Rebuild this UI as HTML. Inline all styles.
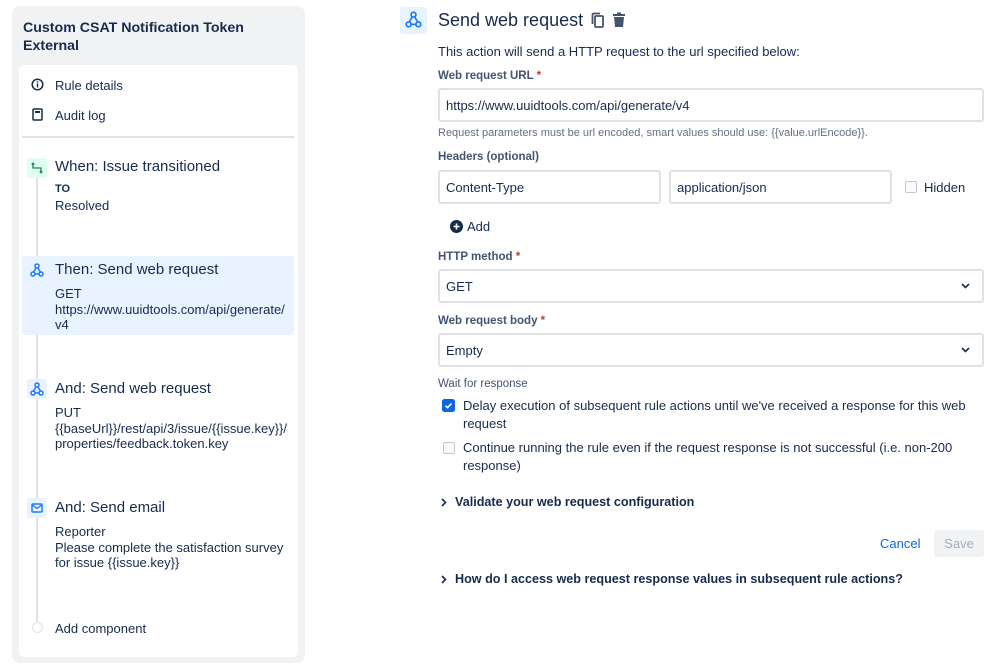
<!DOCTYPE html>
<html><head><meta charset="utf-8"><style>
*{box-sizing:border-box;margin:0;padding:0}
body{width:999px;height:667px;background:#fff;font-family:"Liberation Sans",sans-serif;color:#172b4d;position:relative;overflow:hidden}
.a{position:absolute;white-space:nowrap}
.t13{font-size:13px}
.lbl{font-size:11.5px;font-weight:bold;color:#44546f}
.req{color:#c9372c}
.inp{position:absolute;border:2px solid #dfe1e6;border-radius:3px;background:#fff;font-size:13px;padding-left:6px;display:flex;align-items:center}
.cb{position:absolute;width:12px;height:12px;border:1.5px solid #c1c7d0;border-radius:2px;background:#fafbfc}
.ic{position:absolute;width:20px;height:20px;border-radius:3px;display:flex;align-items:center;justify-content:center}
</style></head><body>
<div class="a" style="left:12px;top:6px;width:293px;height:657px;background:#f1f2f4;border-radius:8px"></div>
<div class="a" style="left:23px;top:19px;font-size:14.2px;font-weight:bold;line-height:18px">Custom CSAT Notification Token<br>External</div>
<div class="a" style="left:19px;top:65px;width:279px;height:592px;background:#fff;border-radius:6px"></div>
<svg class="a" style="left:31px;top:78px" width="13" height="13" viewBox="0 0 13 13"><circle cx="6.5" cy="6.5" r="5.3" fill="none" stroke="#172b4d" stroke-width="1.5"/><rect x="5.8" y="5.5" width="1.4" height="4" fill="#172b4d"/><circle cx="6.5" cy="3.9" r="0.8" fill="#172b4d"/></svg>
<div class="a t13" style="left:55px;top:78px">Rule details</div>
<svg class="a" style="left:32px;top:108px" width="11" height="13" viewBox="0 0 11 13"><rect x="1" y="1" width="9" height="11" rx="1" fill="none" stroke="#172b4d" stroke-width="1.5"/><rect x="3" y="3" width="5" height="2" fill="#172b4d"/></svg>
<div class="a t13" style="left:55px;top:108px">Audit log</div>
<div class="a" style="left:22px;top:136px;width:272px;height:2px;background:#dfe1e6"></div>
<div class="a" style="left:36px;top:175px;width:2px;height:447px;background:#dfe1e6"></div>
<div class="a" style="left:22px;top:256px;width:272px;height:79px;background:#e9f2ff;border-radius:3px"></div>
<div class="ic" style="left:27px;top:158px;background:#dcfff1"><svg width="12" height="12" viewBox="0 0 12 12"><circle cx="2" cy="2" r="1.4" fill="#1f845a"/><circle cx="10" cy="10" r="1.4" fill="#1f845a"/><path d="M2 2v4h8v4" fill="none" stroke="#1f845a" stroke-width="1.3"/></svg></div>
<div class="a" style="left:55px;top:158px;font-size:15px">When: Issue transitioned</div>
<div class="a" style="left:55px;top:183px;font-size:11px;font-weight:bold">TO</div>
<div class="a t13" style="left:55px;top:198px">Resolved</div>
<svg class="a" style="left:30px;top:263px" width="14" height="14" viewBox="0 0 14 14"><g fill="none" stroke="#1d7afc" stroke-width="1.5"><circle cx="7" cy="3" r="2"/><circle cx="3" cy="11" r="2"/><circle cx="11" cy="11" r="2"/><path d="M6 5L3.5 9M5 11h4M8 5l2.5 4"/></g></svg>
<div class="a" style="left:55px;top:261px;font-size:15px">Then: Send web request</div>
<div class="a t13" style="left:55px;top:286px;line-height:15.5px">GET<br>https://www.uuidtools.com/api/generate/<br>v4</div>
<div class="ic" style="left:27px;top:379px;background:#e9f2ff"><svg width="14" height="14" viewBox="0 0 14 14"><g fill="none" stroke="#1d7afc" stroke-width="1.5"><circle cx="7" cy="3" r="2"/><circle cx="3" cy="11" r="2"/><circle cx="11" cy="11" r="2"/><path d="M6 5L3.5 9M5 11h4M8 5l2.5 4"/></g></svg></div>
<div class="a" style="left:55px;top:380px;font-size:15px">And: Send web request</div>
<div class="a t13" style="left:55px;top:405px;line-height:15.5px">PUT<br>{{baseUrl}}/rest/api/3/issue/{{issue.key}}/<br>properties/feedback.token.key</div>
<div class="ic" style="left:27px;top:498px;background:#e9f2ff"><svg width="12" height="10" viewBox="0 0 12 10"><rect x="1" y="1" width="10" height="8" rx="1" fill="none" stroke="#1d7afc" stroke-width="1.5"/><path d="M1.5 2l4.5 3.5L10.5 2" fill="none" stroke="#1d7afc" stroke-width="1.3"/></svg></div>
<div class="a" style="left:55px;top:499px;font-size:15px">And: Send email</div>
<div class="a t13" style="left:55px;top:524px;line-height:15.5px">Reporter<br>Please complete the satisfaction survey<br>for issue {{issue.key}}</div>
<div class="a" style="left:32px;top:622px;width:11px;height:11px;border:1.5px solid #dfe1e6;border-radius:50%;background:#fff"></div>
<div class="a t13" style="left:55px;top:621px">Add component</div>

<div class="a" style="left:400px;top:7px;width:27px;height:27px;background:#e9f2ff;border-radius:3px"></div>
<svg class="a" style="left:405px;top:11px" width="17" height="17" viewBox="0 0 14 14"><g fill="none" stroke="#1d7afc" stroke-width="1.4"><circle cx="7" cy="3" r="2"/><circle cx="3" cy="11" r="2"/><circle cx="11" cy="11" r="2"/><path d="M6 5L3.5 9M5 11h4M8 5l2.5 4"/></g></svg>
<div class="a" style="left:438px;top:10px;font-size:18px">Send web request</div>
<svg class="a" style="left:591px;top:12px" width="14" height="16" viewBox="0 0 14 16"><rect x="4" y="4" width="8" height="11" rx="1" fill="none" stroke="#44546f" stroke-width="1.8"/><path d="M1.5 12V2.5a1 1 0 0 1 1-1H9" fill="none" stroke="#44546f" stroke-width="1.8"/></svg>
<svg class="a" style="left:612px;top:12px" width="14" height="16" viewBox="0 0 14 16"><rect x="1" y="2" width="12" height="2" fill="#44546f"/><rect x="5" y="0.5" width="4" height="2" fill="#44546f"/><path d="M2 5h10l-1 10H3z" fill="#44546f"/></svg>
<div class="a t13" style="left:438px;top:44px">This action will send a HTTP request to the url specified below:</div>
<div class="a lbl" style="left:438px;top:70px">Web request URL <span class="req">*</span></div>
<div class="inp" style="left:438px;top:88px;width:546px;height:34px">https://www.uuidtools.com/api/generate/v4</div>
<div class="a" style="left:438px;top:127px;font-size:11px;color:#626f86">Request parameters must be url encoded, smart values should use: {{value.urlEncode}}.</div>
<div class="a lbl" style="left:438px;top:151px">Headers (optional)</div>
<div class="inp" style="left:438px;top:170px;width:223px;height:34px">Content-Type</div>
<div class="inp" style="left:669px;top:170px;width:223px;height:34px">application/json</div>
<div class="cb" style="left:905px;top:181px"></div>
<div class="a t13" style="left:924px;top:180px">Hidden</div>
<svg class="a" style="left:450px;top:220px" width="13" height="13" viewBox="0 0 13 13"><circle cx="6.5" cy="6.5" r="6.5" fill="#172b4d"/><path d="M6.5 3.5v6M3.5 6.5h6" stroke="#fff" stroke-width="1.6"/></svg>
<div class="a t13" style="left:467px;top:219px">Add</div>
<div class="a lbl" style="left:438px;top:251px">HTTP method <span class="req">*</span></div>
<div class="inp" style="left:438px;top:269px;width:546px;height:34px">GET</div>
<svg class="a" style="left:961px;top:283px" width="9" height="6" viewBox="0 0 9 6"><path d="M1 1l3.5 3.5L8 1" fill="none" stroke="#172b4d" stroke-width="1.6"/></svg>
<div class="a lbl" style="left:438px;top:315px">Web request body <span class="req">*</span></div>
<div class="inp" style="left:438px;top:333px;width:546px;height:34px">Empty</div>
<svg class="a" style="left:961px;top:347px" width="9" height="6" viewBox="0 0 9 6"><path d="M1 1l3.5 3.5L8 1" fill="none" stroke="#172b4d" stroke-width="1.6"/></svg>
<div class="a" style="left:438px;top:378px;font-size:11.5px;color:#44546f">Wait for response</div>
<svg class="a" style="left:442px;top:399px" width="13" height="13" viewBox="0 0 13 13"><rect width="13" height="13" rx="2.5" fill="#0c66e4"/><path d="M3.5 6.7l2 2 4-4.2" fill="none" stroke="#fff" stroke-width="1.6"/></svg>
<div class="a t13" style="left:463px;top:397px;line-height:17.5px">Delay execution of subsequent rule actions until we've received a response for this web<br>request</div>
<div class="cb" style="left:443px;top:442px"></div>
<div class="a t13" style="left:463px;top:439px;line-height:17.5px">Continue running the rule even if the request response is not successful (i.e. non-200<br>response)</div>
<svg class="a" style="left:441px;top:498px" width="6" height="9" viewBox="0 0 6 9"><path d="M1 1l3.5 3.5L1 8" fill="none" stroke="#172b4d" stroke-width="1.6"/></svg>
<div class="a" style="left:455px;top:495px;font-weight:bold;font-size:12.6px">Validate your web request configuration</div>
<div class="a t13" style="left:880px;top:536px;color:#0c66e4">Cancel</div>
<div class="a" style="left:934px;top:530px;width:50px;height:27px;background:#f1f2f4;border-radius:3px;color:#a5adba;font-size:13px;text-align:center;line-height:27px">Save</div>
<svg class="a" style="left:441px;top:575px" width="6" height="9" viewBox="0 0 6 9"><path d="M1 1l3.5 3.5L1 8" fill="none" stroke="#172b4d" stroke-width="1.6"/></svg>
<div class="a" style="left:455px;top:572px;font-weight:bold;font-size:12.6px">How do I access web request response values in subsequent rule actions?</div>
</body></html>
